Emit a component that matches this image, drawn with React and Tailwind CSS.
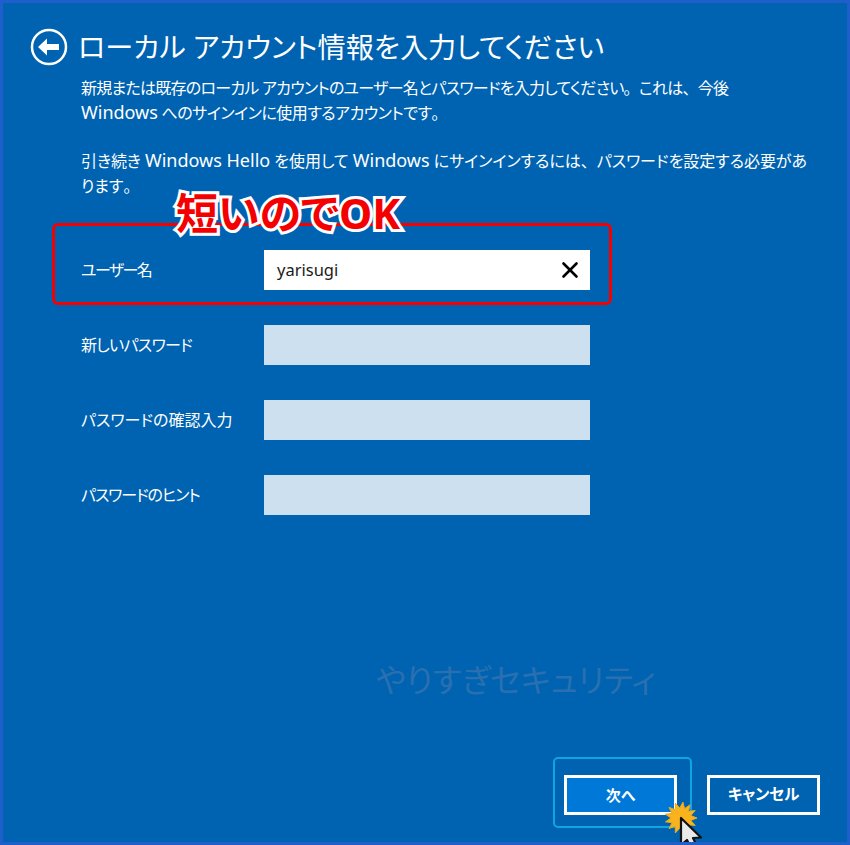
// App.jsx
import React from 'react';
import { X } from 'lucide-react';

const fontJa = "font-['Noto_Sans','Noto_Sans_CJK_JP',sans-serif] [font-feature-settings:'palt']";

// 英字は和文より少し大きい
const Latin = ({ children }) => <span className="text-[18px] leading-none tracking-normal">{children}</span>;
// 句読点は全角のまま
const Punct = ({ children }) => <span className="[font-feature-settings:normal]">{children}</span>;

const FormRow = ({ label, labelClass = '', children }) => (
  <div className="flex items-center h-10">
    <div className={`w-[183px] text-[16px] text-white ${labelClass}`}>{label}</div>
    {children}
  </div>
);

const EmptyInput = () => <div className="w-[326px] h-10 bg-[#cce0ef]" />;

const App = () => {
  const starPoints = [];
  for (let i = 0; i < 26; i++) {
    const r = i % 2 === 0 ? 16 : 10;
    const a = (i * Math.PI) / 13;
    starPoints.push(`${20 + r * Math.cos(a)},${20 + r * Math.sin(a)}`);
  }

  return (
    <div className={`relative w-[850px] h-[845px] bg-[#0063b1] border-[3px] border-[#1e5fcb] overflow-hidden flex flex-col ${fontJa}`}>
      {/* ヘッダー */}
      <div className="flex items-center gap-[10px] pl-[27px] pt-[25px]">
        <svg width="38" height="38" viewBox="0 0 38 38" fill="none" className="shrink-0">
          <circle cx="19" cy="19" r="17" stroke="white" strokeWidth="2.5" />
          <path d="M8 19 L17 10.5 L17 16 L29 16 L29 22 L17 22 L17 27.5 Z" fill="white" />
        </svg>
        <h1 className="text-[28.2px] leading-[38px] text-white font-normal whitespace-nowrap">ローカル アカウント情報を入力してください</h1>
      </div>

      {/* 説明文 */}
      <div className="pl-[78px] mt-[10px] text-[16px] leading-[25px] text-white whitespace-nowrap">
        <p>
          <span className="tracking-[-0.75px]">新規または既存のローカル アカウントのユーザー名とパスワードを入力してください<Punct>。</Punct>これは<Punct>、</Punct>今後</span>
          <br />
          <span className="tracking-[-0.5px]"><Latin>Windows</Latin> へのサインインに使用するアカウントです<Punct>。</Punct></span>
        </p>
        <p className="mt-[23px] tracking-[-0.04px]">
          引き続き <Latin>Windows Hello</Latin> を使用して <Latin>Windows</Latin> にサインインするには<Punct>、</Punct>パスワードを設定する必要があ
          <br />
          ります<Punct>。</Punct>
        </p>
      </div>

      {/* フォーム */}
      <div className="relative pl-[78px] mt-[51px] flex flex-col gap-[35px]">
        <FormRow label="ユーザー名" labelClass="tracking-[-1.6px]">
          <div className="w-[326px] h-10 bg-white flex items-center justify-between pl-[13px] pr-[7px]">
            <span className="text-[16.5px] text-[#1a1a1a]">yarisugi</span>
            <X size={26} strokeWidth={2.4} className="text-black" />
          </div>
        </FormRow>
        <FormRow label="新しいパスワード" labelClass="tracking-[-0.7px]"><EmptyInput /></FormRow>
        <FormRow label="パスワードの確認入力"><EmptyInput /></FormRow>
        <FormRow label="パスワードのヒント" labelClass="tracking-[-1.1px]"><EmptyInput /></FormRow>

        {/* 赤枠 */}
        <div className="absolute left-[49px] top-[-27px] w-[560px] h-[82px] border-[3px] border-[#f40000] rounded-[6px]" />
      </div>

      {/* 注釈 */}
      <div className="absolute left-[173px] top-[180px] text-[42px] leading-[60px] font-bold text-[#f40000] [-webkit-text-stroke:6px_white] [paint-order:stroke_fill] whitespace-nowrap">短いのでOK</div>

      {/* 透かし */}
      <div className="absolute left-[373px] top-[655px] text-[32px] leading-[44px] text-[#2a70b0] whitespace-nowrap">やりすぎセキュリティ</div>

      {/* ボタン */}
      <div className="mt-auto mb-[27px] mr-[27px] flex justify-end gap-[30px]">
        <button className="relative w-[113px] h-10 bg-[#0078d7] border-[3px] border-white text-white text-[15px] font-bold">
          次へ
          <span className="absolute left-[-14px] top-[-21px] w-[139px] h-[71px] border-2 border-[#0ea5e0] rounded-[5px]" />
        </button>
        <button className="w-[113px] h-10 bg-[#0063b1] border-[3px] border-white text-white text-[15.5px] font-bold">キャンセル</button>
      </div>

      {/* カーソル */}
      <svg width="50" height="60" viewBox="0 0 50 60" className="absolute left-[658px] top-[795px]">
        <polygon points={starPoints.join(' ')} fill="#f9b31e" stroke="#f0a818" strokeWidth="1" />
        <path d="M20 20 L20 47 L26 42 L31 52 L37 50 L32 40 L40 39.5 Z" fill="#e8e8e8" stroke="#111" strokeWidth="2.2" strokeLinejoin="round" />
      </svg>
    </div>
  );
};

export default App;
